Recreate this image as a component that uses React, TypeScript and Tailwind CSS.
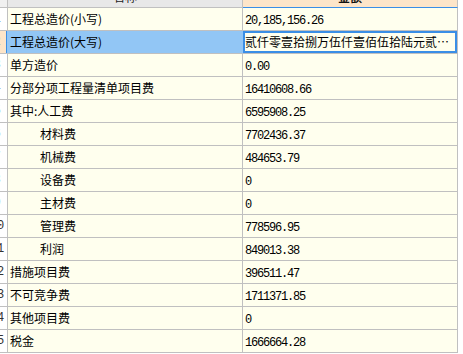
import React from "react";

type Row = {
  no: number;
  label: string;
  value: string;
  indent?: boolean;
  selected?: boolean;
  cjk?: boolean;
};

const rows: Row[] = [
  { no: 1, label: "工程总造价(小写)", value: "20,185,156.26" },
  { no: 2, label: "工程总造价(大写)", value: "贰仟零壹拾捌万伍仟壹佰伍拾陆元贰…", selected: true, cjk: true },
  { no: 3, label: "单方造价", value: "0.00" },
  { no: 4, label: "分部分项工程量清单项目费", value: "16410608.66" },
  { no: 5, label: "其中:人工费", value: "6595908.25" },
  { no: 6, label: "材料费", value: "7702436.37", indent: true },
  { no: 7, label: "机械费", value: "484653.79", indent: true },
  { no: 8, label: "设备费", value: "0", indent: true },
  { no: 9, label: "主材费", value: "0", indent: true },
  { no: 10, label: "管理费", value: "778596.95", indent: true },
  { no: 11, label: "利润", value: "849013.38", indent: true },
  { no: 12, label: "措施项目费", value: "396511.47" },
  { no: 13, label: "不可竞争费", value: "1711371.85" },
  { no: 14, label: "其他项目费", value: "0" },
  { no: 15, label: "税金", value: "1666664.28" },
];

const labelFont = {
  fontFamily: '"Noto Sans CJK SC", "Liberation Sans", sans-serif',
};

export default function App() {
  return (
    <div
      className="w-[463px] h-[354px] overflow-hidden bg-white text-[12px] text-black"
      style={labelFont}
    >
      {/* header */}
      <div className="flex h-[8px]">
        <div className="w-[8px] shrink-0 bg-[#f0f0f0] border-r border-b border-[#c0c0c0]" />
        <div className="w-[235px] shrink-0 overflow-hidden bg-[#e8e8e8] border-r border-b border-[#c0c0c0] text-center">
          <div className="mt-[-9px] leading-[12px] text-[#222]">名称</div>
        </div>
        <div className="w-[215px] shrink-0 overflow-hidden bg-[#fde5c9] border-r border-[#c0c0c0] border-b border-b-[#3a8ee6] text-center">
          <div className="mt-[-9px] leading-[12px] font-bold text-[#111]">金额</div>
        </div>
      </div>

      {rows.map((r) => (
        <div key={r.no} className="flex h-[23px]">
          <div
            className={
              r.selected
                ? "w-[8px] shrink-0 overflow-hidden bg-[#fde5c9] border-r border-r-[#92c6f5] border-b border-b-[#c0c0c0] shadow-[inset_-1px_0_0_#3a8ee6]"
                : "w-[8px] shrink-0 overflow-hidden bg-white border-r border-b border-[#c0c0c0]"
            }
          >
            <div className="ml-[-13px] w-[20px] text-center leading-[22px] text-[#333] font-['Liberation_Mono',monospace]">
              {r.no}
            </div>
          </div>
          <div
            className={
              r.selected
                ? "w-[235px] shrink-0 overflow-hidden whitespace-nowrap bg-[#92c6f5] border-r border-r-[#92c6f5] border-b border-b-[#c0c0c0] leading-[22px] pl-[2px]"
                : "w-[235px] shrink-0 overflow-hidden whitespace-nowrap bg-[#ffffee] border-r border-b border-[#c0c0c0] leading-[22px] pl-[2px]"
            }
          >
            <span className={r.indent ? "pl-[30px]" : ""}>{r.label}</span>
          </div>
          <div
            className={
              r.selected
                ? "w-[215px] shrink-0 overflow-hidden whitespace-nowrap bg-[#ffffee] border-r border-b border-[#c0c0c0] leading-[22px] pl-[2px] shadow-[inset_0_0_0_2px_#3a8ee6]"
                : "w-[215px] shrink-0 overflow-hidden whitespace-nowrap bg-[#ffffee] border-r border-b border-[#c0c0c0] leading-[22px] pl-[2px]"
            }
          >
            {r.cjk ? (
              <span>{r.value}</span>
            ) : (
              <span className="font-['Liberation_Mono',monospace] tracking-[-1.2px]">
                {r.value}
              </span>
            )}
          </div>
        </div>
      ))}
    </div>
  );
}
